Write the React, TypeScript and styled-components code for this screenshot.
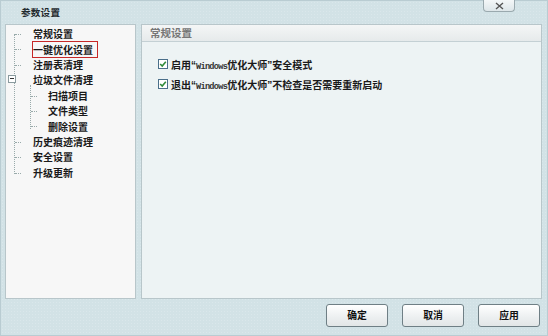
import React from "react";
import styled, { createGlobalStyle } from "styled-components";

const Global = createGlobalStyle`
  html, body { margin: 0; padding: 0; }
  body { width: 548px; height: 336px; overflow: hidden; font-family: "Noto Sans CJK SC", "Noto Sans", sans-serif; }
`;

const Window = styled.div`
  width: 548px;
  height: 336px;
  box-sizing: border-box;
  background-color: #d2e2e6;
  background-image: radial-gradient(rgba(255, 255, 255, 0.18) 0.6px, transparent 0.8px);
  background-size: 3px 3px;
  border: 1px solid #b9ccd2;
  display: flex;
  flex-direction: column;
`;

const TitleBar = styled.div`
  height: 23px;
  display: flex;
  align-items: flex-start;
  justify-content: space-between;
  padding: 0 32px 0 20px;
`;

const Title = styled.div`
  font-size: 9.6px;
  line-height: 23px;
  color: #1f2a2e;
  font-weight: 700;
  letter-spacing: 0.2px;
`;

const CloseButton = styled.div`
  width: 32px;
  height: 12px;
  margin-top: -1px;
  box-sizing: border-box;
  border: 1px solid #9aa9ae;
  border-top: none;
  border-radius: 0 0 4px 4px;
  background: linear-gradient(#f4f7f8, #dde6e9);
  display: flex;
  align-items: center;
  justify-content: center;
`;

const Body = styled.div`
  display: flex;
  gap: 5px;
  padding: 0 5px 0 4px;
  height: 275px;
`;

const TreePanel = styled.div`
  width: 131px;
  box-sizing: border-box;
  background: #f7f7f7;
  border: 1px solid #b8c6ca;
  position: relative;
  padding-top: 1px;
`;

const TreeRow = styled.div<{ $level: number }>`
  height: 15.4px;
  display: flex;
  align-items: center;
  padding-left: ${(p) => (p.$level === 0 ? 27 : 42)}px;
  font-size: 10px;
  font-weight: 700;
  color: #1a1a1a;
  position: relative;
`;

const Label = styled.span<{ $boxed?: boolean }>`
  display: inline-block;
  line-height: 15px;
  ${(p) =>
    p.$boxed
      ? "border: 1px solid #c62828; padding: 0 4px 0 0; margin: 0 0 0 -1px; line-height: 15px;"
      : ""}
`;

const Branch = styled.i<{ $x: number }>`
  position: absolute;
  left: ${(p) => p.$x}px;
  top: 8px;
  width: 6px;
  border-top: 1px dotted #9aa;
`;

const VLine = styled.i<{ $x: number; $top: number; $h: number }>`
  position: absolute;
  left: ${(p) => p.$x}px;
  top: ${(p) => p.$top}px;
  height: ${(p) => p.$h}px;
  border-left: 1px dotted #9aa;
`;

const Expander = styled.i`
  position: absolute;
  left: 2px;
  top: 50px;
  width: 8px;
  height: 8px;
  box-sizing: border-box;
  border: 1px solid #8a9a9e;
  background: #fff;
  &::after {
    content: "";
    position: absolute;
    left: 1px;
    top: 2px;
    width: 4px;
    border-top: 1px solid #333;
  }
`;

const ContentPanel = styled.div`
  flex: 1;
  box-sizing: border-box;
  border: 1px solid #b8c6ca;
  background: #edf3f4;
  display: flex;
  flex-direction: column;
`;

const SectionHeader = styled.div`
  height: 16px;
  border-bottom: 1px solid #c4d0d4;
  background: linear-gradient(#f4f6f6, #e6eaeb);
  font-size: 10.5px;
  font-weight: 700;
  color: #777;
  padding-left: 8px;
  line-height: 16px;
`;

const Options = styled.div`
  padding: 13px 0 0 16px;
  display: flex;
  flex-direction: column;
  gap: 2px;
`;

const OptionRow = styled.label`
  display: flex;
  align-items: center;
  gap: 3px;
  font-family: "Liberation Sans", "Noto Sans CJK SC", sans-serif;
  font-size: 10px;
  font-weight: 700;
  color: #1a1a1a;
  height: 18px;
`;

const Latin = styled.span`
  font-family: "Liberation Mono", monospace;
  font-size: 8.6px;
  letter-spacing: -0.7px;
  font-weight: 700;
  color: #333;
`;

const Check = styled.span`
  width: 10px;
  height: 10px;
  box-sizing: border-box;
  border: 1px solid #4b6f8a;
  background: #fff;
  display: inline-flex;
  align-items: center;
  justify-content: center;
`;

const Footer = styled.div`
  flex: 1;
  display: flex;
  justify-content: flex-end;
  align-items: center;
  gap: 14px;
  padding: 0 7px 4px 0;
`;

const Button = styled.div`
  width: 62px;
  height: 23px;
  box-sizing: border-box;
  border: 1px solid #6f7f85;
  border-radius: 3px;
  background: linear-gradient(#ffffff, #eceff0 60%, #e2e6e7);
  font-size: 9.8px;
  font-weight: 700;
  color: #111;
  display: flex;
  align-items: center;
  justify-content: center;
`;

const CheckMark = () => (
  <svg width="8" height="8" viewBox="0 0 8 8">
    <path d="M1.2 4 L3.2 6 L6.8 1.8" fill="none" stroke="#2f8a3a" strokeWidth="1.6" />
  </svg>
);

const CloseX = () => (
  <svg width="9" height="8" viewBox="0 0 9 8">
    <path d="M1 1 L8 7 M8 1 L1 7" stroke="#555" strokeWidth="1.4" />
  </svg>
);

const tree: { label: string; level: number; boxed?: boolean }[] = [
  { label: "常规设置", level: 0 },
  { label: "一键优化设置", level: 0, boxed: true },
  { label: "注册表清理", level: 0 },
  { label: "垃圾文件清理", level: 0 },
  { label: "扫描项目", level: 1 },
  { label: "文件类型", level: 1 },
  { label: "删除设置", level: 1 },
  { label: "历史痕迹清理", level: 0 },
  { label: "安全设置", level: 0 },
  { label: "升级更新", level: 0 },
];

export default function App() {
  return (
    <>
      <Global />
      <Window>
        <TitleBar>
          <Title>参数设置</Title>
          <CloseButton>
            <CloseX />
          </CloseButton>
        </TitleBar>
        <Body>
          <TreePanel>
            <VLine $x={8} $top={9} $h={140} />
            <VLine $x={24} $top={60} $h={44} />
            <Expander />
            {tree.map((t) => (
              <TreeRow key={t.label} $level={t.level}>
                {t.label !== "垃圾文件清理" && <Branch $x={t.level === 0 ? 9 : 25} />}
                <Label $boxed={t.boxed}>{t.label}</Label>
              </TreeRow>
            ))}
          </TreePanel>
          <ContentPanel>
            <SectionHeader>常规设置</SectionHeader>
            <Options>
              <OptionRow>
                <Check>
                  <CheckMark />
                </Check>
                <span>
                  启用“<Latin>Windows</Latin>优化大师”安全模式
                </span>
              </OptionRow>
              <OptionRow>
                <Check>
                  <CheckMark />
                </Check>
                <span>
                  退出“<Latin>Windows</Latin>优化大师”不检查是否需要重新启动
                </span>
              </OptionRow>
            </Options>
          </ContentPanel>
        </Body>
        <Footer>
          <Button>确定</Button>
          <Button>取消</Button>
          <Button>应用</Button>
        </Footer>
      </Window>
    </>
  );
}
